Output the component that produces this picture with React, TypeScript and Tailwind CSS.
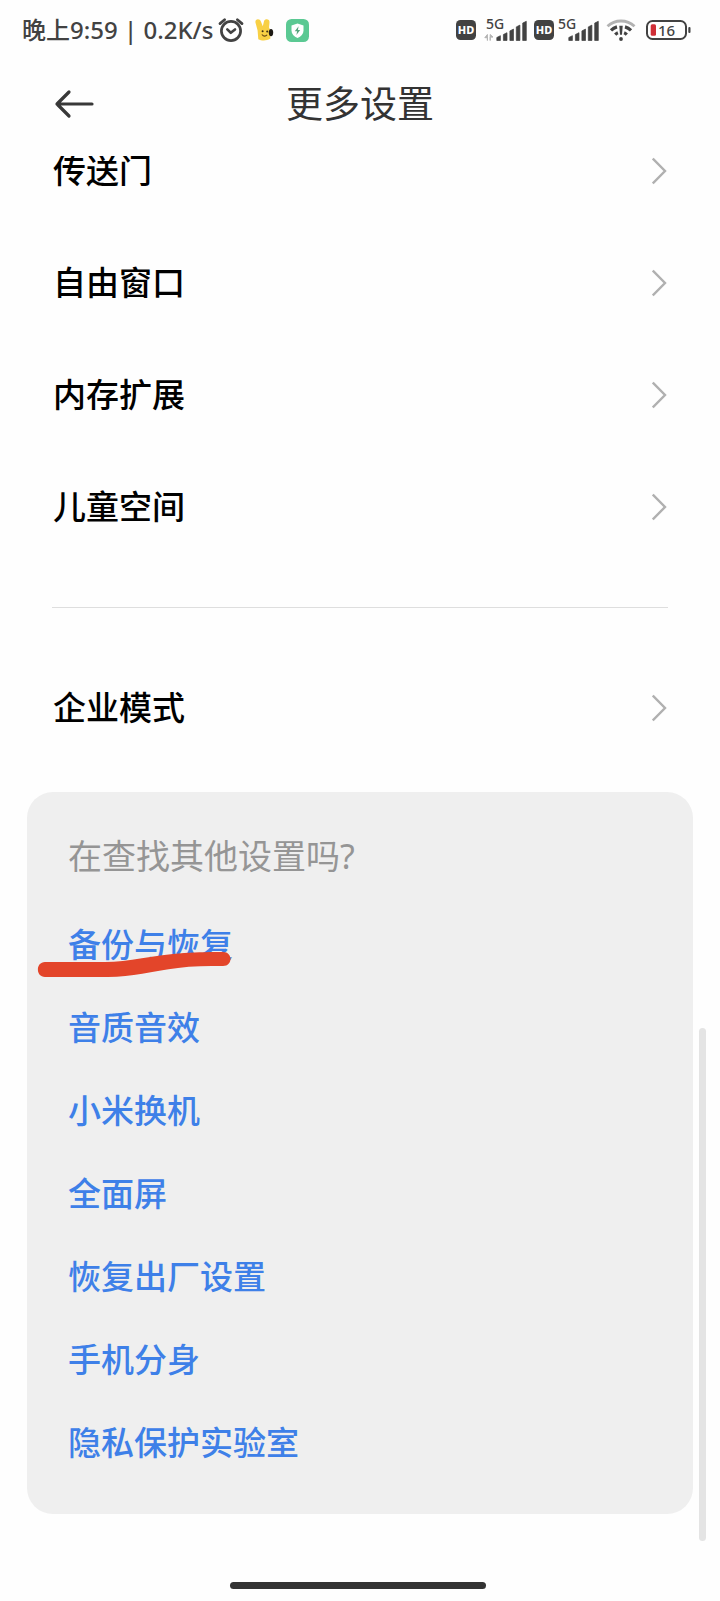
import React from "react";

const mainItems = ["传送门", "自由窗口", "内存扩展", "儿童空间"];

const relatedLinks = [
  "备份与恢复",
  "音质音效",
  "小米换机",
  "全面屏",
  "恢复出厂设置",
  "手机分身",
  "隐私保护实验室",
];

const INK = "#424242";

function AlarmIcon() {
  return (
    <svg width="26" height="26" viewBox="0 0 26 26" fill="none" stroke={INK} strokeLinecap="round" aria-hidden="true">
      <circle cx="13" cy="14" r="9.6" strokeWidth="2.7" />
      <path d="M9.3 12.4l3.5 3.4 4.2-3.4" strokeWidth="2.6" strokeLinejoin="round" />
      <path d="M2 6.6l4.6-3.9M24 6.6l-4.6-3.9" strokeWidth="2.8" />
    </svg>
  );
}

function RabbitIcon() {
  return (
    <svg width="20" height="24" viewBox="0 0 20 24" aria-hidden="true">
      <path
        d="M.4 4.200C0 .8 4.800.2 5.900 3.400L7.800 8.200 9 3.200C9.900.2 14.900.6 14.500 4.400L14 9.500c.9 1.300 1.300 3 1.300 5v6.300C11.500 23 6.500 23 3.300 21.200L2.600 12.500z"
        fill="#f8d044"
      />
      <ellipse cx="16" cy="14.600" rx="2.200" ry="3.600" fill="#1d1a14" />
      <circle cx="7.600" cy="13.200" r="1" fill="#3b2d12" />
      <circle cx="12.200" cy="13.600" r="1" fill="#3b2d12" />
      <path d="M7.200 16.800c1.200 1.700 3.400 1.800 4.600.4" stroke="#6b4b12" strokeWidth="1.100" fill="none" strokeLinecap="round" />
    </svg>
  );
}

function ShieldIcon() {
  return (
    <svg width="23" height="23" viewBox="0 0 23 23" aria-hidden="true">
      <rect width="23" height="23" rx="5.500" fill="#5bc993" />
      <path d="M11.500 4.400l6 2v5c0 3.500-2.400 6-6 7.500-3.600-1.500-6-4-6-7.500v-5z" fill="#fff" />
      <path d="M12.600 7.300l-3.800 5h2.300l-.7 3.600 3.800-5h-2.300z" fill="#55a57d" />
    </svg>
  );
}

function HdIcon() {
  return (
    <svg width="20" height="20" viewBox="0 0 20 20" aria-hidden="true">
      <rect width="20" height="20" rx="4.500" fill={INK} />
      <text x="10" y="14" textAnchor="middle" fontSize="11" fontWeight="800" fill="#fff">
        HD
      </text>
    </svg>
  );
}

function SignalIcon({ active = false }: { active?: boolean }) {
  return (
    <svg width="44" height="36" viewBox="0 -5 44 36" fill={INK} aria-hidden="true">
      <text x="2" y="12" fontSize="14" fontWeight="500">
        5G
      </text>
      {active && (
        <path d="M3.400 23.500v-6L.8 20.700h2.600zM6.200 23.500v-6l2.800 2.600H6.200z" fill="#b4b4b4" stroke="#b4b4b4" strokeWidth="1" />
      )}
      <path
        d="M12.800 23.500v-3l3.600-1.800v4.800zM19.400 23.500v-6l3.600-1.800v7.800zM25.900 23.500v-9.600l3.600-1.800v11.400zM32.300 23.500V9.900l3.600-1.800v15.400zM38.700 23.500V6.100l3.600-1.800v19.200z"
        stroke={INK}
        strokeWidth=".7"
        strokeLinejoin="round"
      />
    </svg>
  );
}

function WifiIcon() {
  return (
    <svg width="30" height="24" viewBox="0 0 30 24" fill="none" aria-hidden="true">
      <path d="M1.500 8.300C9 1.200 21 1.200 28.500 8.300" stroke="#b2b2b2" strokeWidth="2.800" />
      <path d="M5 12.400c1.700-1.700 3.700-2.900 6-3.500M25 12.400c-1.700-1.700-3.700-2.900-6-3.500" stroke={INK} strokeWidth="3.200" />
      <path d="M9.200 16.600c.9-.9 1.700-1.500 2.700-1.900M20.800 16.600c-.9-.9-1.700-1.500-2.700-1.900" stroke={INK} strokeWidth="3.200" />
      <path d="M13.300 7.800h3.400l-.7 9h-2z" fill={INK} />
      <circle cx="15" cy="21" r="1.900" fill={INK} />
    </svg>
  );
}

function BatteryIcon() {
  return (
    <svg width="46" height="20" viewBox="0 0 46 20" role="img" aria-label="电量 16%">
      <rect x="1" y="1" width="39" height="18" rx="5.500" fill="none" stroke={INK} strokeWidth="2" />
      <rect x="42.300" y="7" width="2.200" height="6" rx="1" fill={INK} />
      <rect x="4.700" y="4.300" width="5.300" height="11.400" rx="1.500" fill="#cf2e36" />
      <text x="20.500" y="15.500" textAnchor="middle" fontSize="15" fontWeight="500" fill={INK}>
        16
      </text>
    </svg>
  );
}

function SettingsRow({ label }: { label: string }) {
  return (
    <a href="#" className="flex h-28 items-center justify-between text-[33px] leading-10 font-medium text-black">
      <span className="pl-px">{label}</span>
      <svg width="16" height="28" viewBox="0 0 16 28" fill="none" stroke="#b0b0b0" strokeWidth="2.400" aria-hidden="true">
        <path d="M.8 1.500L13 14 .8 26.500" />
      </svg>
    </a>
  );
}

function StatusBar() {
  return (
    <div className="flex h-15 items-center justify-between pr-7 pl-[22px] text-[#424242]">
      <div className="flex items-center">
        <span className="text-2xl font-medium whitespace-nowrap">晚上9:59 | 0.2K/s</span>
        <span className="ml-[5px] flex items-center gap-[11px]">
          <AlarmIcon />
          <RabbitIcon />
          <ShieldIcon />
        </span>
      </div>
      <div className="flex items-center gap-1.5">
        <span className="flex items-center gap-2">
          <HdIcon />
          <SignalIcon active />
        </span>
        <span className="flex items-center gap-0.5">
          <HdIcon />
          <SignalIcon />
        </span>
        <span className="flex items-center gap-2.5">
          <WifiIcon />
          <BatteryIcon />
        </span>
      </div>
    </div>
  );
}

export default function App() {
  return (
    <div
      lang="zh-CN"
      className="relative flex min-h-screen flex-col bg-[#fefefe] font-['Noto_Sans','Noto_Sans_CJK_SC',sans-serif]"
    >
      <StatusBar />

      <header className="grid h-24 grid-cols-[1fr_auto_1fr] items-start px-13 pt-5">
        <button type="button" aria-label="返回" className="flex h-12 w-12 items-center">
          <svg width="42" height="30" viewBox="0 0 42 30" fill="none" stroke="#383838" strokeWidth="3.200" strokeLinecap="round" strokeLinejoin="round" aria-hidden="true">
            <path d="M40 15H5M17 3L5 15l12 12" />
          </svg>
        </button>
        <h1 className="text-[37px] leading-12 font-normal text-[#333333]">更多设置</h1>
      </header>

      <main className="relative flex-1 overflow-hidden">
        <nav aria-label="更多设置" className="-mt-[41px] px-[52px]">
          {mainItems.map((label) => (
            <SettingsRow key={label} label={label} />
          ))}
          <hr className="my-11 border-t border-[#dedede]" />
          <SettingsRow label="企业模式" />
        </nav>

        <section className="mx-[27px] mt-7 rounded-[26px] bg-[#efefef] px-[41px] pt-11 pb-[30px]">
          <h2 className="text-[34px] leading-10 font-normal text-[#959595]">在查找其他设置吗?</h2>
          <ul className="mt-[27px]">
            {relatedLinks.map((label, index) => (
              <li key={label} className="relative flex h-[83px] items-center">
                <a href="#" className="text-[33px] leading-10 font-medium text-[#3e80e8]">
                  {label}
                </a>
                {index === 0 && (
                  <svg
                    className="pointer-events-none absolute top-12 -left-8"
                    width="200"
                    height="34"
                    viewBox="0 0 200 34"
                    fill="#e3452a"
                    aria-hidden="true"
                  >
                    <path d="M9 11H69C92 11 118 4 148 2C162 1 176 1 187 1C197 1 197 15 187 15C172 15 156 15 142 17C116 20 96 26 72 26H9C-.5 26-.5 11 9 11z" />
                  </svg>
                )}
              </li>
            ))}
          </ul>
        </section>

        <div className="absolute right-[14px] bottom-6 h-[513px] w-[7px] rounded-full bg-[#e4e4e4]" />
      </main>

      <footer className="flex h-9 items-center justify-center pt-1 pr-1">
        <div className="h-[7px] w-64 rounded-full bg-[#333333]" />
      </footer>
    </div>
  );
}
